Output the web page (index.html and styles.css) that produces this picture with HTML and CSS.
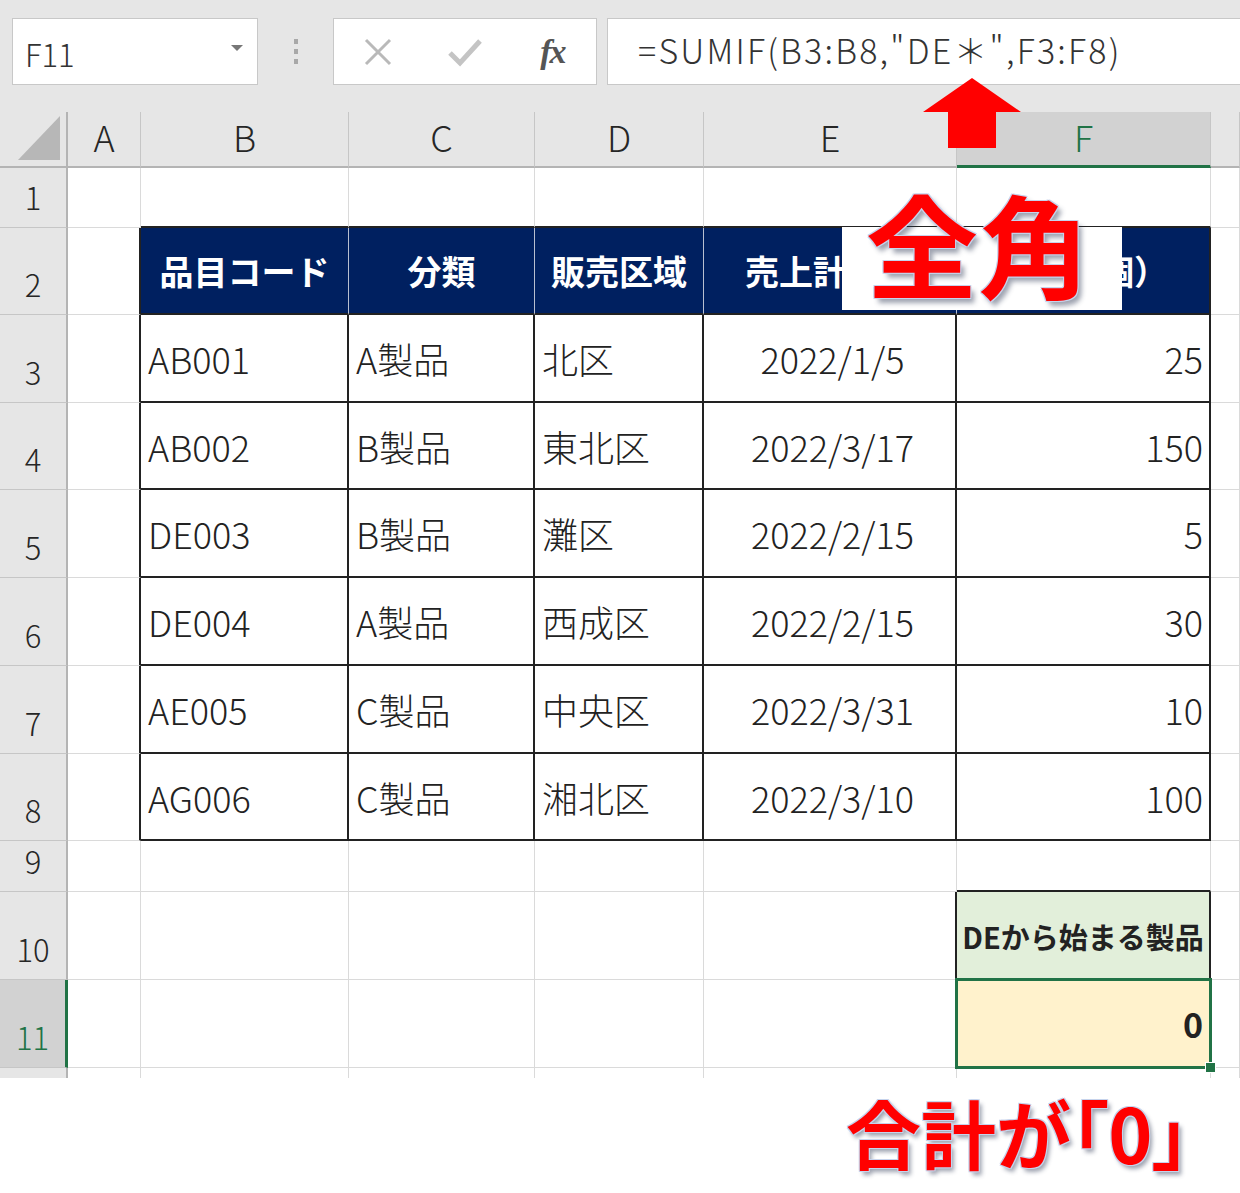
FILE: index.html
```html
<!DOCTYPE html>
<html lang="ja">
<head>
<meta charset="UTF-8">
<title>SUMIF 全角</title>
<link rel="stylesheet" href="styles.css">
</head>
<body>
<div class="app">
    <div class="toolbar">
        <div class="namebox"><span>F11</span><span class="caret"></span></div>
        <div class="grip"><i></i><i></i><i></i></div>
        <div class="fxbtns">
            <span class="btn">
                <svg width="30" height="30" viewBox="0 0 30 30"><path d="M3 3 L27 27 M27 3 L3 27" stroke="#b9b9b9" stroke-width="3" fill="none"/></svg>
            </span>
            <span class="btn">
                <svg width="34" height="30" viewBox="0 0 34 30"><path d="M2 16 L12 26 L32 4" stroke="#c4c4c4" stroke-width="5" fill="none"/></svg>
            </span>
            <span class="btn fx">fx</span>
        </div>
        <div class="formula">=SUMIF(B3:B8,"DE＊",F3:F8)</div>
    </div>

    <div class="sheet">
        <!-- column headers -->
        <div class="c corner"><svg width="44" height="46" viewBox="0 0 44 46"><polygon points="42,0 42,44 0,44" fill="#b7b7b7"/></svg></div>
        <div class="c ch">A</div>
        <div class="c ch">B</div>
        <div class="c ch">C</div>
        <div class="c ch">D</div>
        <div class="c ch">E</div>
        <div class="c ch on">F</div>
        <div class="c ch"></div>

        <!-- 1 -->
        <div class="c rh">1</div>
        <div class="c"></div>
        <div class="c tp"></div>
        <div class="c tp"></div>
        <div class="c tp"></div>
        <div class="c tp"></div>
        <div class="c tp"></div>
        <div class="c"></div>

        <!-- 2 -->
        <div class="c rh">2</div>
        <div class="c lt"></div>
        <div class="c th">品目コード</div>
        <div class="c th">分類</div>
        <div class="c th">販売区域</div>
        <div class="c th">売上計上日</div>
        <div class="c th end">数量（個）</div>
        <div class="c"></div>

        <!-- 3 -->
        <div class="c rh">3</div>
        <div class="c lt"></div>
        <div class="c t">AB001</div>
        <div class="c t">A製品</div>
        <div class="c t">北区</div>
        <div class="c t m">2022/1/5</div>
        <div class="c t r">25</div>
        <div class="c"></div>

        <!-- 4 -->
        <div class="c rh">4</div>
        <div class="c lt"></div>
        <div class="c t">AB002</div>
        <div class="c t">B製品</div>
        <div class="c t">東北区</div>
        <div class="c t m">2022/3/17</div>
        <div class="c t r">150</div>
        <div class="c"></div>

        <!-- 5 -->
        <div class="c rh">5</div>
        <div class="c lt"></div>
        <div class="c t">DE003</div>
        <div class="c t">B製品</div>
        <div class="c t">灘区</div>
        <div class="c t m">2022/2/15</div>
        <div class="c t r">5</div>
        <div class="c"></div>

        <!-- 6 -->
        <div class="c rh">6</div>
        <div class="c lt"></div>
        <div class="c t">DE004</div>
        <div class="c t">A製品</div>
        <div class="c t">西成区</div>
        <div class="c t m">2022/2/15</div>
        <div class="c t r">30</div>
        <div class="c"></div>

        <!-- 7 -->
        <div class="c rh">7</div>
        <div class="c lt"></div>
        <div class="c t">AE005</div>
        <div class="c t">C製品</div>
        <div class="c t">中央区</div>
        <div class="c t m">2022/3/31</div>
        <div class="c t r">10</div>
        <div class="c"></div>

        <!-- 8 -->
        <div class="c rh">8</div>
        <div class="c lt"></div>
        <div class="c t">AG006</div>
        <div class="c t">C製品</div>
        <div class="c t">湘北区</div>
        <div class="c t m">2022/3/10</div>
        <div class="c t r">100</div>
        <div class="c"></div>

        <!-- 9 -->
        <div class="c rh">9</div>
        <div class="c"></div>
        <div class="c"></div>
        <div class="c"></div>
        <div class="c"></div>
        <div class="c"></div>
        <div class="c tp"></div>
        <div class="c"></div>

        <!-- 10 -->
        <div class="c rh">10</div>
        <div class="c"></div>
        <div class="c"></div>
        <div class="c"></div>
        <div class="c"></div>
        <div class="c lt"></div>
        <div class="c lbl">DEから始まる製品</div>
        <div class="c"></div>

        <!-- 11 -->
        <div class="c rh on">11</div>
        <div class="c"></div>
        <div class="c"></div>
        <div class="c"></div>
        <div class="c"></div>
        <div class="c"></div>
        <div class="c sel">0</div>
        <div class="c"></div>

        <!-- 12 (cut) -->
        <div class="c rh cut"></div>
        <div class="c cut"></div>
        <div class="c cut"></div>
        <div class="c cut"></div>
        <div class="c cut"></div>
        <div class="c cut"></div>
        <div class="c cut"></div>
        <div class="c cut"></div>
    </div>

    <div class="note">合計が「0」</div>

    <svg class="arrow" width="100" height="72" viewBox="0 0 100 72">
        <polygon points="49,0 98,34 73,34 73,70 25,70 25,34 0,34" fill="#ff0000"/>
    </svg>
    <div class="zen-box"></div>
    <div class="zen">全角</div>
</div>
</body>
</html>
```

FILE: styles.css
```css
html, body { margin: 0; background: #fff; }

body {
    font-family: "Noto Sans CJK JP", "Noto Sans", sans-serif;
    color: #222;
}

.app {
    position: relative;
    width: 1240px;
    height: 1193px;
    overflow: hidden;
}

/* formula bar */
.toolbar {
    height: 112px;
    box-sizing: border-box;
    padding: 18px 0 0 12px;
    background: #e6e6e6;
    display: flex;
    align-items: flex-start;
}
.namebox {
    width: 246px;
    height: 67px;
    box-sizing: border-box;
    background: #fff;
    border: 1px solid #c8c8c8;
    display: flex;
    align-items: center;
    justify-content: space-between;
    padding: 4px 14px 0 12px;
    font-size: 31px;
    font-weight: 300;
    color: #333;
}
.caret {
    border-left: 6px solid transparent;
    border-right: 6px solid transparent;
    border-top: 6px solid #777;
    margin-bottom: 12px;
}
.grip {
    width: 75px;
    height: 67px;
    display: flex;
    flex-direction: column;
    align-items: center;
    justify-content: center;
    gap: 5px;
}
.grip i {
    width: 4px;
    height: 5px;
    background: #a8a8a8;
}
.fxbtns {
    width: 264px;
    height: 67px;
    box-sizing: border-box;
    background: #fff;
    border: 1px solid #c8c8c8;
    display: flex;
    align-items: center;
}
.btn {
    width: 88px;
    display: flex;
    justify-content: center;
    align-items: center;
}
.fx {
    font-family: "Liberation Serif", serif;
    font-style: italic;
    font-weight: bold;
    font-size: 34px;
    color: #555;
    letter-spacing: -2px;
}
.formula {
    flex: 1;
    height: 67px;
    margin-left: 10px;
    box-sizing: border-box;
    background: #fff;
    border: 1px solid #c8c8c8;
    border-right: none;
    padding: 0 0 4px 30px;
    display: flex;
    align-items: center;
    font-size: 34px;
    font-weight: 300;
    letter-spacing: 2.2px;
    color: #333;
}

/* sheet grid */
.sheet {
    display: grid;
    grid-template-columns: 68px 73px 208px 186px 169px 253px 254px 29px;
    grid-template-rows: 56px 60px 87px 88px 87px 88px 88px 88px 87px 51px 88px 88px 10px;
}
.c {
    box-sizing: border-box;
    border-right: 1px solid #dadada;
    border-bottom: 1px solid #dadada;
    display: flex;
    align-items: center;
    padding: 0 4px 0 7px;
    font-size: 36px;
    font-weight: 300;
    white-space: nowrap;
}
.corner {
    background: #e6e6e6;
    border-right: 2px solid #b4b4b4;
    border-bottom: 2px solid #b4b4b4;
    align-items: flex-end;
    justify-content: flex-end;
    padding: 0 4px 4px 0;
}
.ch {
    background: #e6e6e6;
    border-right: 1px solid #c6c6c6;
    border-bottom: 2px solid #b4b4b4;
    justify-content: center;
    padding: 0 0 6px;
    font-size: 36px;
    color: #262626;
}
.ch.on {
    background: #d2d2d2;
    color: #217346;
    border-bottom: 3px solid #217346;
}
.rh {
    background: #e6e6e6;
    border-right: 2px solid #b4b4b4;
    border-bottom: 1px solid #c6c6c6;
    justify-content: center;
    align-items: flex-end;
    padding: 0 0 8px;
    font-size: 31px;
    color: #262626;
}
.rh.on {
    background: #d2d2d2;
    color: #217346;
    border-right: 3px solid #217346;
}
.cut {
    border-bottom: none;
}

/* table B2:F8 */
.tp { border-bottom: 2px solid #222; }
.lt { border-right: 2px solid #222; }
.th {
    background: #002060;
    color: #fff;
    font-weight: bold;
    font-size: 34px;
    justify-content: center;
    padding: 0;
    border-right: 1px solid #b8bfd0;
    border-bottom: 2px solid #222;
}
.th.end { border-right: 2px solid #222; }
.t {
    border-right: 2px solid #222;
    border-bottom: 2px solid #222;
}
.m { justify-content: center; padding: 0 0 0 6px; }
.r { justify-content: flex-end; padding-right: 6px; }

/* result block */
.lbl {
    background: #e2efda;
    border-right: 2px solid #222;
    font-weight: bold;
    font-size: 29px;
    justify-content: center;
    padding: 0;
}
.sel {
    position: relative;
    background: #fff2cc;
    justify-content: flex-end;
    padding-right: 7px;
    font-weight: bold;
    font-size: 34px;
}
.sel::after {
    content: "";
    position: absolute;
    top: -2px;
    left: -2px;
    right: -2px;
    bottom: -2px;
    border: 3px solid #217346;
}
.sel::before {
    content: "";
    position: absolute;
    right: -6px;
    bottom: -6px;
    width: 9px;
    height: 9px;
    background: #217346;
    border: 1px solid #fff;
    z-index: 2;
}

/* annotations */
.note {
    padding: 16px 50px 0 0;
    text-align: right;
    font-size: 75px;
    font-weight: bold;
    line-height: 1;
    color: #ff0000;
    font-feature-settings: "palt";
    text-shadow: -1px -1px 0 #c6d3ec, 1px -1px 0 #c6d3ec, -1px 1px 0 #c6d3ec, 1px 1px 0 #c6d3ec,
        3px 4px 4px rgba(40, 50, 80, 0.45);
}
.arrow {
    position: absolute;
    left: 923px;
    top: 78px;
}
.zen-box {
    position: absolute;
    left: 842px;
    top: 227px;
    width: 280px;
    height: 83px;
    background: #fff;
}
.zen {
    position: absolute;
    left: 866px;
    top: 186px;
    font-size: 112px;
    font-weight: bold;
    line-height: 1;
    color: #ff0000;
    text-shadow: -1px -1px 0 #c6d3ec, 1px -1px 0 #c6d3ec, -1px 1px 0 #c6d3ec, 1px 1px 0 #c6d3ec,
        4px 5px 5px rgba(40, 50, 80, 0.45);
}
```
